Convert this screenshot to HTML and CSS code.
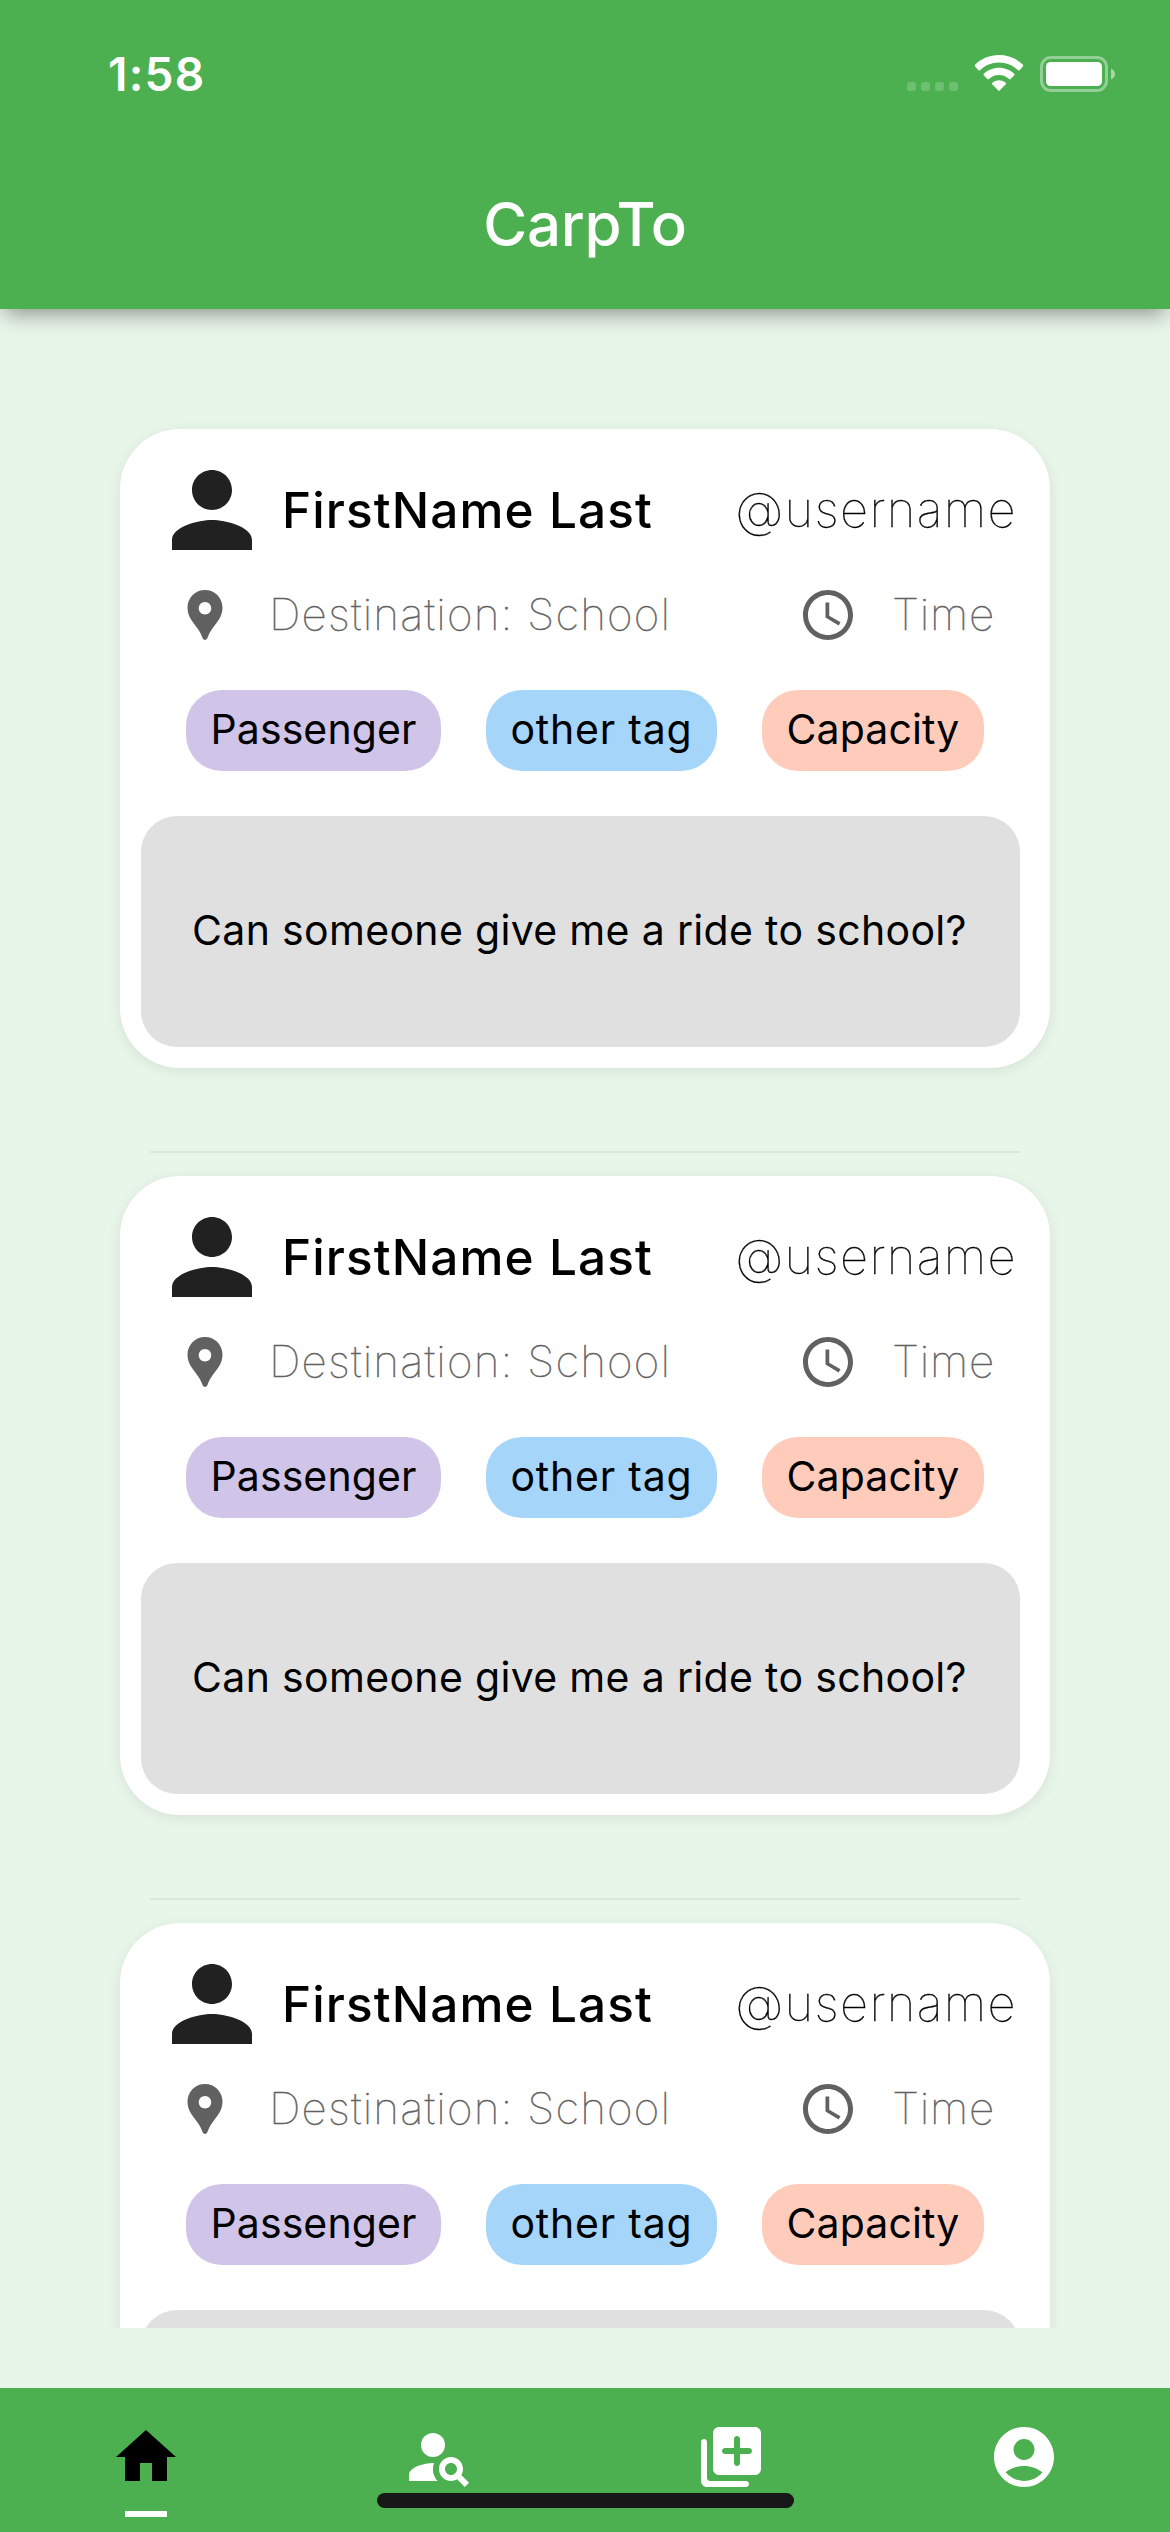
FILE: index.html
```html
<!DOCTYPE html>
<html lang="en">
<head>
<meta charset="utf-8">
<title>CarpTo</title>
<link rel="stylesheet" href="styles.css">
</head>
<body>
<svg class="sprite" width="0" height="0" aria-hidden="true">
  <symbol id="person" viewBox="0 0 24 24"><path d="M12 12c2.210 0 4-1.790 4-4s-1.790-4-4-4-4 1.790-4 4 1.790 4 4 4zm0 2c-2.670 0-8 1.340-8 4v2h16v-2c0-2.660-5.330-4-8-4z"/></symbol>
  <symbol id="place" viewBox="0 0 24 24"><path d="M12 2C8.130 2 5 5.130 5 9c0 1.740.5 3.370 1.410 4.840.95 1.540 2.200 2.860 3.160 4.400.47.75.81 1.450 1.170 2.260.26.550.47 1.500 1.260 1.500s1-.95 1.250-1.500c.37-.81.7-1.510 1.170-2.260.96-1.530 2.210-2.850 3.160-4.400C18.500 12.370 19 10.740 19 9c0-3.870-3.130-7-7-7zm0 9.750c-1.380 0-2.500-1.120-2.500-2.500s1.120-2.500 2.500-2.500 2.500 1.120 2.500 2.500-1.120 2.500-2.500 2.500z"/></symbol>
  <symbol id="clock" viewBox="0 0 24 24"><path d="M11.990 2C6.470 2 2 6.480 2 12s4.470 10 9.990 10C17.520 22 22 17.520 22 12S17.520 2 11.990 2zM12 20c-4.420 0-8-3.580-8-8s3.580-8 8-8 8 3.580 8 8-3.580 8-8 8z"/><path d="M12.500 7H11v6l5.250 3.150.75-1.230-4.500-2.670z"/></symbol>
</svg>

<header class="app-bar">
  <div class="status">
    <span class="status-time">1:58</span>
    <div class="status-icons">
      <span class="signal"><i></i><i></i><i></i><i></i></span>
      <svg class="wifi" viewBox="0 0 48 36" fill="#fff">
        <path d="M24 0C33.200 0 41.800 3.500 48 9.700Q48.500 10.500 48 11.200L44.800 15.100Q43.900 15.900 43 15.200C38 10.300 31.200 7.500 24 7.500S10 10.300 5 15.200Q4.100 15.900 3.200 15.100L0 11.200Q-.5 10.500 0 9.700C6.200 3.500 14.800 0 24 0z"/>
        <path d="M24 12.700C30 12.700 35.300 15 39.300 18.800Q39.900 19.500 39.300 20.200L35.600 24.100Q34.900 24.700 34.100 24.100C31.500 21.600 28 20 24 20S16.500 21.600 13.900 24.100Q13.100 24.700 12.400 24.100L8.700 20.200Q8.100 19.500 8.700 18.800C12.700 15 18 12.700 24 12.700z"/>
        <path d="M24 25.200C26.600 25.200 29 26.200 30.700 27.800Q31.200 28.500 30.700 29.200L24.700 35.600Q24 36.200 23.300 35.600L17.300 29.200Q16.800 28.500 17.300 27.800C19 26.200 21.400 25.200 24 25.200z"/>
      </svg>
      <svg class="battery" viewBox="0 0 75 36" fill="#fff">
        <rect x="1.500" y="1.500" width="65" height="33" rx="9.500" fill="none" stroke="#fff" stroke-width="3" opacity=".4"/>
        <rect x="6" y="6" width="56" height="24" rx="4.500"/>
        <path d="M71 12.500c2.500.9 4 3 4 5.500s-1.500 4.600-4 5.500z" opacity=".5"/>
      </svg>
    </div>
  </div>
  <h1 class="title">CarpTo</h1>
</header>

<main class="feed">
  <article class="card">
    <div class="card-head">
      <svg class="avatar"><use href="#person"/></svg>
      <span class="name">FirstName Last</span>
      <span class="handle">@username</span>
    </div>
    <div class="card-meta">
      <svg class="meta-icon"><use href="#place"/></svg>
      <span class="destination">Destination: School</span>
      <svg class="meta-icon"><use href="#clock"/></svg>
      <span class="time">Time</span>
    </div>
    <div class="tags">
      <span class="tag tag-role">Passenger</span>
      <span class="tag tag-other">other tag</span>
      <span class="tag tag-capacity">Capacity</span>
    </div>
    <p class="message">Can someone give me a ride to school?</p>
  </article>
  <hr class="divider">
  <article class="card">
    <div class="card-head">
      <svg class="avatar"><use href="#person"/></svg>
      <span class="name">FirstName Last</span>
      <span class="handle">@username</span>
    </div>
    <div class="card-meta">
      <svg class="meta-icon"><use href="#place"/></svg>
      <span class="destination">Destination: School</span>
      <svg class="meta-icon"><use href="#clock"/></svg>
      <span class="time">Time</span>
    </div>
    <div class="tags">
      <span class="tag tag-role">Passenger</span>
      <span class="tag tag-other">other tag</span>
      <span class="tag tag-capacity">Capacity</span>
    </div>
    <p class="message">Can someone give me a ride to school?</p>
  </article>
  <hr class="divider">
  <article class="card">
    <div class="card-head">
      <svg class="avatar"><use href="#person"/></svg>
      <span class="name">FirstName Last</span>
      <span class="handle">@username</span>
    </div>
    <div class="card-meta">
      <svg class="meta-icon"><use href="#place"/></svg>
      <span class="destination">Destination: School</span>
      <svg class="meta-icon"><use href="#clock"/></svg>
      <span class="time">Time</span>
    </div>
    <div class="tags">
      <span class="tag tag-role">Passenger</span>
      <span class="tag tag-other">other tag</span>
      <span class="tag tag-capacity">Capacity</span>
    </div>
    <div class="message"></div>
  </article>
</main>

<nav class="tabs">
  <a class="tab tab-active"><svg class="tab-icon" viewBox="0 0 24 24"><path d="M10 20v-6h4v6h5v-8h3L12 3 2 12h3v8z"/></svg></a>
  <a class="tab"><svg class="tab-icon" viewBox="0 0 24 24"><circle cx="10" cy="8" r="4"/><path d="M10.350 14.010C7.620 13.910 2 15.270 2 18v2h9.540c-2.470-2.760-1.230-5.890-1.190-5.990zM19.430 18.020c.36-.59.57-1.280.57-2.020 0-2.210-1.790-4-4-4s-4 1.790-4 4 1.790 4 4 4c.74 0 1.430-.22 2.020-.57L20.590 22 22 20.590l-2.570-2.570zM16 18c-1.100 0-2-.9-2-2s.9-2 2-2 2 .9 2 2-.9 2-2 2z"/></svg></a>
  <a class="tab"><svg class="tab-icon" viewBox="0 0 24 24"><path d="M3 6c-.55 0-1 .45-1 1v13c0 1.100.9 2 2 2h13c.55 0 1-.45 1-1s-.45-1-1-1H5c-.55 0-1-.45-1-1V7c0-.55-.45-1-1-1zm17-4H8c-1.100 0-2 .9-2 2v12c0 1.100.9 2 2 2h12c1.100 0 2-.9 2-2V4c0-1.100-.9-2-2-2zm-2 9h-3v3c0 .55-.45 1-1 1s-1-.45-1-1v-3h-3c-.55 0-1-.45-1-1s.45-1 1-1h3V6c0-.55.45-1 1-1s1 .45 1 1v3h3c.55 0 1 .45 1 1s-.45 1-1 1z"/></svg></a>
  <a class="tab"><svg class="tab-icon" viewBox="0 0 24 24"><path d="M12 2C6.480 2 2 6.480 2 12s4.480 10 10 10 10-4.480 10-10S17.520 2 12 2zm0 4c1.930 0 3.500 1.570 3.500 3.500S13.930 13 12 13s-3.500-1.570-3.500-3.500S10.070 6 12 6zm0 14c-2.030 0-4.430-.82-6.140-2.880C7.550 15.800 9.680 15 12 15s4.450.8 6.140 2.120C16.430 19.180 14.030 20 12 20z"/></svg></a>
  <span class="home-indicator"></span>
</nav>
</body>
</html>
```

FILE: styles.css
```css
* { box-sizing: border-box; }

body {
  margin: 0;
  height: 2532px;
  display: flex;
  flex-direction: column;
  overflow: hidden;
  background: #e8f5e9;
  color: #000;
  font-family: Inter, "Liberation Sans", sans-serif;
}

svg { display: block; flex: none; }
.sprite { position: absolute; }

/* App bar */
.app-bar {
  position: relative;
  z-index: 1;
  flex: none;
  height: 309px;
  background: #4caf50;
  color: #fff;
  box-shadow: 0 10px 20px -5px rgba(0, 0, 0, .4);
}

.status {
  display: flex;
  justify-content: space-between;
  height: 141px;
  padding: 0 55px 0 108px;
}

.status-time {
  font-size: 46px;
  font-weight: 600;
  line-height: 148px;
  letter-spacing: 1.2px;
}

.status-icons {
  display: flex;
  align-items: flex-end;
  height: 36px;
  margin-top: 55px;
}

.signal { display: flex; gap: 5px; margin-right: 17px; }
.signal i { width: 9px; height: 9px; border-radius: 3px; background: rgba(255, 255, 255, .2); }
.wifi { width: 48px; height: 36px; margin-right: 17px; overflow: visible; }
.battery { width: 75px; height: 36px; margin-bottom: -1px; }

.title {
  margin: 0;
  font-size: 60px;
  font-weight: 500;
  line-height: 166px;
  letter-spacing: -.3px;
  text-align: center;
}

/* Feed */
.feed {
  flex: none;
  height: 2019px;
  padding: 120px 120px 0;
  overflow: hidden;
}

.card {
  height: 639px;
  padding: 21px 0;
  border-radius: 60px;
  background: #fff;
  box-shadow: 0 3px 14px rgba(0, 0, 0, .08);
}

.card-head {
  display: flex;
  align-items: center;
  height: 120px;
  padding: 0 33px 0 32px;
}

.avatar { width: 120px; height: 120px; fill: #212121; }

.name {
  margin-left: 10px;
  font-size: 49.5px;
  font-weight: 500;
  letter-spacing: 1.08px;
}

.handle {
  margin: -2px 0 0 auto;
  font-size: 49px;
  font-weight: 100;
  letter-spacing: 1.35px;
  -webkit-text-stroke: .3px currentColor;
}

.card-meta {
  display: flex;
  align-items: center;
  height: 60px;
  margin-top: 15px;
  padding: 0 55px;
  color: #616161;
  font-size: 44px;
  font-weight: 100;
  line-height: 58px;
  -webkit-text-stroke: .5px currentColor;
}

.meta-icon { width: 60px; height: 60px; fill: #616161; }
.destination { width: 530px; margin: -2px 0 0 34px; letter-spacing: 1.2px; }
.time { margin: -2px 0 0 34px; letter-spacing: .8px; }

.tags {
  display: flex;
  justify-content: center;
  gap: 45px;
  margin-top: 45px;
}

.tag {
  height: 81px;
  border-radius: 36px;
  font-size: 41px;
  line-height: 78px;
  text-align: center;
}

.tag-role { width: 255px; background: #d1c4e9; letter-spacing: .1px; }
.tag-other { width: 231px; background: #a6d5fa; letter-spacing: .8px; }
.tag-capacity { width: 222px; background: #ffccbc; letter-spacing: .1px; }

.message {
  height: 231px;
  margin: 45px 30px 0 21px;
  padding-left: 51px;
  border-radius: 36px;
  background: #e0e0e0;
  font-size: 41px;
  line-height: 228px;
  letter-spacing: .33px;
  white-space: nowrap;
}

.divider {
  height: 2px;
  margin: 83px 30px 23px;
  border: 0;
  background: #d9e6dc;
}

/* Bottom tabs */
.tabs {
  position: relative;
  display: flex;
  height: 144px;
  margin-top: auto;
  background: #4caf50;
}

.tab {
  flex: 1;
  display: flex;
  flex-direction: column;
  align-items: center;
  padding-top: 33px;
}

.tab-icon { width: 72px; height: 72px; fill: #fff; }
.tab-active .tab-icon { fill: #000; }
.tab-active::after { content: ""; width: 42px; height: 6px; margin-top: 18px; background: #fff; }

.home-indicator {
  position: absolute;
  left: 377px;
  bottom: 24px;
  width: 417px;
  height: 15px;
  border-radius: 8px;
  background: #181818;
}
```
